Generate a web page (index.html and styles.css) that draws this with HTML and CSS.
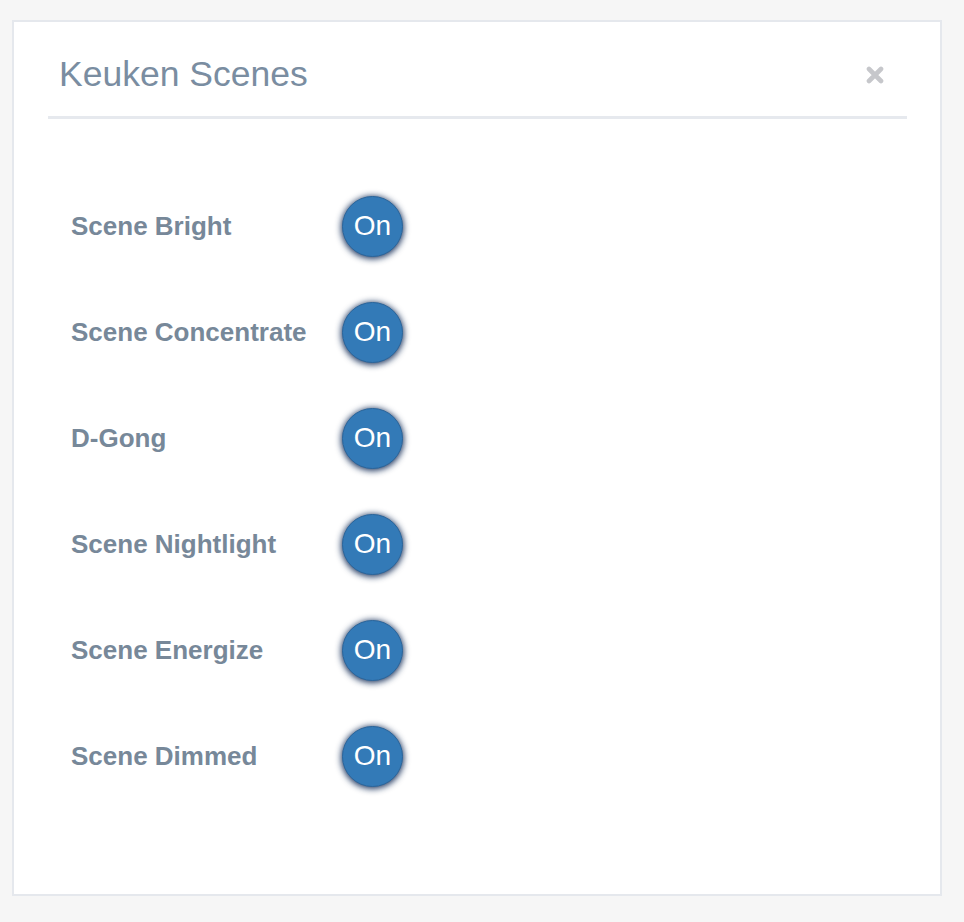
FILE: index.html
```html
<!doctype html>
<html lang="en">
  <head>
    <meta charset="UTF-8" />
    <title>Keuken Scenes</title>
    <link rel="stylesheet" href="styles.css">
  </head>
  <body>
    <div class="panel">
      <div class="panel-header">
        <h2 class="panel-title">Keuken Scenes</h2>
        <button class="close" aria-label="Close">
          <svg width="18" height="18" viewBox="0 0 18 18">
            <path d="M3 3 L15 15 M15 3 L3 15" stroke="#c6c7cb" stroke-width="4.6" stroke-linecap="round" fill="none" />
          </svg>
        </button>
      </div>

      <div class="scenes">
        <div class="scene-name">Scene Bright</div>
        <div><button class="btn-on">On</button></div>

        <div class="scene-name">Scene Concentrate</div>
        <div><button class="btn-on">On</button></div>

        <div class="scene-name">D-Gong</div>
        <div><button class="btn-on">On</button></div>

        <div class="scene-name">Scene Nightlight</div>
        <div><button class="btn-on">On</button></div>

        <div class="scene-name">Scene Energize</div>
        <div><button class="btn-on">On</button></div>

        <div class="scene-name">Scene Dimmed</div>
        <div><button class="btn-on">On</button></div>
      </div>
    </div>
  </body>
</html>
```

FILE: styles.css
```css
body {
  margin: 0;
  padding: 20px 0 0 12px;
  background-color: #f6f6f6;
  font-family: "Liberation Sans", Arial, sans-serif;
}
.panel {
  box-sizing: border-box;
  width: 930px;
  height: 876px;
  background: white;
  border: 2px solid #e5e8ed;
}
.panel-header {
  margin: 0 33px 0 34px;
  padding: 0 23px 0 11px;
  height: 94px;
  border-bottom: 3px solid #e6e9ee;
  display: flex;
  align-items: center;
  justify-content: space-between;
}
.panel-title {
  margin: 10px 0 0 0;
  font-size: 35.5px;
  font-weight: normal;
  color: #7a8da1;
}
.close {
  background: none;
  border: none;
  padding: 0;
  margin-top: 12px;
  cursor: pointer;
  line-height: 0;
}
.scenes {
  display: grid;
  grid-template-columns: 271px auto;
  grid-auto-rows: 106px;
  align-items: center;
  padding: 54px 0 0 57px;
}
.scene-name {
  font-size: 26px;
  font-weight: bold;
  color: #778899;
}
.btn-on {
  width: 61px;
  height: 61px;
  border-radius: 50%;
  border: 1px solid #2a659b;
  background: #337ab7;
  color: white;
  font-family: "Liberation Sans", Arial, sans-serif;
  font-size: 28px;
  padding: 0;
  box-shadow: 0 1px 6px 1px rgba(10, 35, 80, 0.9);
  cursor: pointer;
}
```
